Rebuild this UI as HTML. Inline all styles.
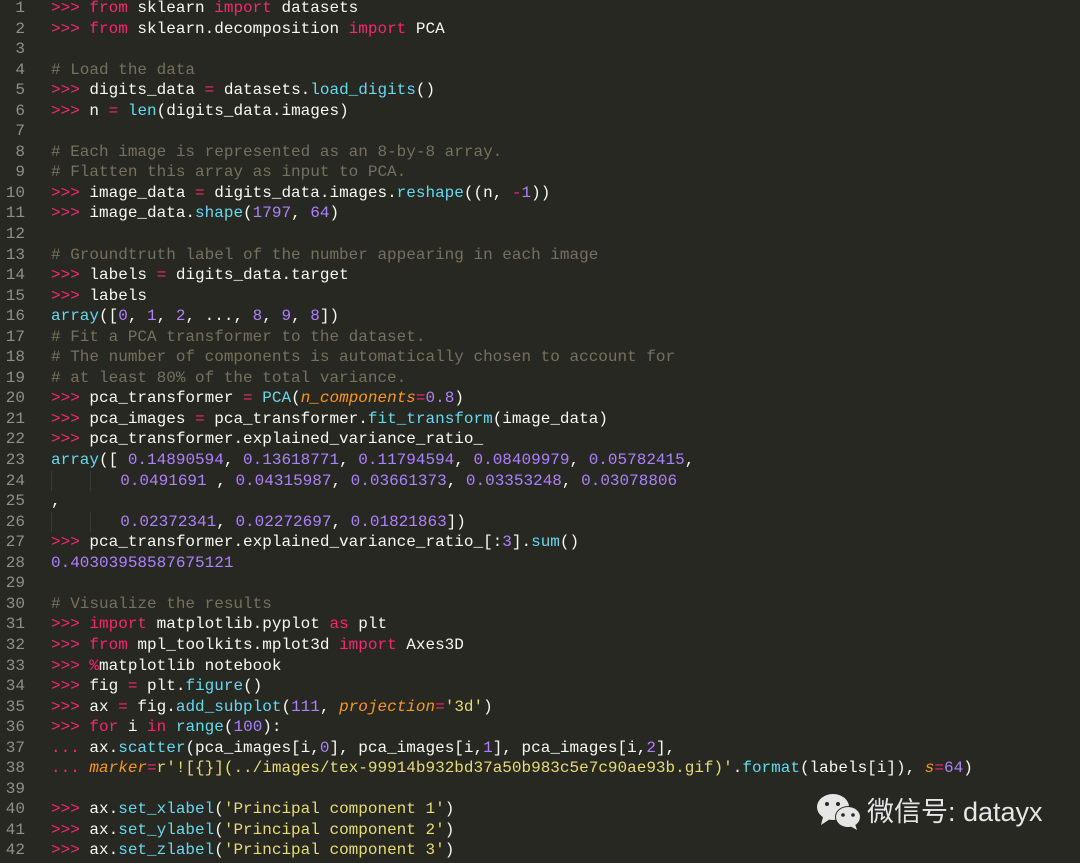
<!DOCTYPE html>
<html><head><meta charset="utf-8"><style>
html,body{margin:0;padding:0;background:#272822;width:1080px;height:863px;overflow:hidden}
.c{position:absolute;left:0;top:-2px;font-family:"Liberation Mono",monospace;font-size:16px;line-height:20.56px;color:#f8f8f2;white-space:normal}
.l{display:block;height:20.56px;white-space:pre}
.n{display:inline-block;width:51px;color:#8f908a;text-align:right;padding-right:26px;box-sizing:border-box}
.k{color:#f92672}.f{color:#66d9ef}.m{color:#ae81ff}.a{color:#fd971f;font-style:italic}.s{color:#e6db74}.cm{color:#75715e}
.g{display:inline-block;width:0;border-left:1px solid #3b3a32;height:20px;vertical-align:top}
.wm{position:absolute;left:867px;top:790px;font-family:"Liberation Sans","Noto Sans CJK SC",sans-serif;font-size:27px;color:#e6e6e6;white-space:nowrap}
</style></head><body>
<div class="c">
<span class="l"><span class="n">1</span><span class="k">&gt;&gt;&gt;</span> <span class="k">from</span> sklearn <span class="k">import</span> datasets</span>
<span class="l"><span class="n">2</span><span class="k">&gt;&gt;&gt;</span> <span class="k">from</span> sklearn.decomposition <span class="k">import</span> PCA</span>
<span class="l"><span class="n">3</span></span>
<span class="l"><span class="n">4</span><span class="cm"># Load the data</span></span>
<span class="l"><span class="n">5</span><span class="k">&gt;&gt;&gt;</span> digits_data <span class="k">=</span> datasets.<span class="f">load_digits</span>()</span>
<span class="l"><span class="n">6</span><span class="k">&gt;&gt;&gt;</span> n <span class="k">=</span> <span class="f">len</span>(digits_data.images)</span>
<span class="l"><span class="n">7</span></span>
<span class="l"><span class="n">8</span><span class="cm"># Each image is represented as an 8-by-8 array.</span></span>
<span class="l"><span class="n">9</span><span class="cm"># Flatten this array as input to PCA.</span></span>
<span class="l"><span class="n">10</span><span class="k">&gt;&gt;&gt;</span> image_data <span class="k">=</span> digits_data.images.<span class="f">reshape</span>((n, <span class="k">-</span><span class="m">1</span>))</span>
<span class="l"><span class="n">11</span><span class="k">&gt;&gt;&gt;</span> image_data.<span class="f">shape</span>(<span class="m">1797</span>, <span class="m">64</span>)</span>
<span class="l"><span class="n">12</span></span>
<span class="l"><span class="n">13</span><span class="cm"># Groundtruth label of the number appearing in each image</span></span>
<span class="l"><span class="n">14</span><span class="k">&gt;&gt;&gt;</span> labels <span class="k">=</span> digits_data.target</span>
<span class="l"><span class="n">15</span><span class="k">&gt;&gt;&gt;</span> labels</span>
<span class="l"><span class="n">16</span><span class="f">array</span>([<span class="m">0</span>, <span class="m">1</span>, <span class="m">2</span>, ..., <span class="m">8</span>, <span class="m">9</span>, <span class="m">8</span>])</span>
<span class="l"><span class="n">17</span><span class="cm"># Fit a PCA transformer to the dataset.</span></span>
<span class="l"><span class="n">18</span><span class="cm"># The number of components is automatically chosen to account for</span></span>
<span class="l"><span class="n">19</span><span class="cm"># at least 80% of the total variance.</span></span>
<span class="l"><span class="n">20</span><span class="k">&gt;&gt;&gt;</span> pca_transformer <span class="k">=</span> <span class="f">PCA</span>(<span class="a">n_components</span><span class="k">=</span><span class="m">0.8</span>)</span>
<span class="l"><span class="n">21</span><span class="k">&gt;&gt;&gt;</span> pca_images <span class="k">=</span> pca_transformer.<span class="f">fit_transform</span>(image_data)</span>
<span class="l"><span class="n">22</span><span class="k">&gt;&gt;&gt;</span> pca_transformer.explained_variance_ratio_</span>
<span class="l"><span class="n">23</span><span class="f">array</span>([ <span class="m">0.14890594</span>, <span class="m">0.13618771</span>, <span class="m">0.11794594</span>, <span class="m">0.08409979</span>, <span class="m">0.05782415</span>,</span>
<span class="l"><span class="n">24</span><span class="g"></span>    <span class="g"></span>   <span class="m">0.0491691</span> , <span class="m">0.04315987</span>, <span class="m">0.03661373</span>, <span class="m">0.03353248</span>, <span class="m">0.03078806</span></span>
<span class="l"><span class="n">25</span>,</span>
<span class="l"><span class="n">26</span><span class="g"></span>    <span class="g"></span>   <span class="m">0.02372341</span>, <span class="m">0.02272697</span>, <span class="m">0.01821863</span>])</span>
<span class="l"><span class="n">27</span><span class="k">&gt;&gt;&gt;</span> pca_transformer.explained_variance_ratio_[:<span class="m">3</span>].<span class="f">sum</span>()</span>
<span class="l"><span class="n">28</span><span class="m">0.40303958587675121</span></span>
<span class="l"><span class="n">29</span></span>
<span class="l"><span class="n">30</span><span class="cm"># Visualize the results</span></span>
<span class="l"><span class="n">31</span><span class="k">&gt;&gt;&gt;</span> <span class="k">import</span> matplotlib.pyplot <span class="k">as</span> plt</span>
<span class="l"><span class="n">32</span><span class="k">&gt;&gt;&gt;</span> <span class="k">from</span> mpl_toolkits.mplot3d <span class="k">import</span> Axes3D</span>
<span class="l"><span class="n">33</span><span class="k">&gt;&gt;&gt;</span> <span class="k">%</span>matplotlib notebook</span>
<span class="l"><span class="n">34</span><span class="k">&gt;&gt;&gt;</span> fig <span class="k">=</span> plt.<span class="f">figure</span>()</span>
<span class="l"><span class="n">35</span><span class="k">&gt;&gt;&gt;</span> ax <span class="k">=</span> fig.<span class="f">add_subplot</span>(<span class="m">111</span>, <span class="a">projection</span><span class="k">=</span><span class="s">'3d'</span>)</span>
<span class="l"><span class="n">36</span><span class="k">&gt;&gt;&gt;</span> <span class="k">for</span> i <span class="k">in</span> <span class="f">range</span>(<span class="m">100</span>):</span>
<span class="l"><span class="n">37</span><span class="k">...</span> ax.<span class="f">scatter</span>(pca_images[i,<span class="m">0</span>], pca_images[i,<span class="m">1</span>], pca_images[i,<span class="m">2</span>],</span>
<span class="l"><span class="n">38</span><span class="k">...</span> <span class="a">marker</span><span class="k">=</span><span class="s">r'![{}](../images/tex-99914b932bd37a50b983c5e7c90ae93b.gif)'</span>.<span class="f">format</span>(labels[i]), <span class="a">s</span><span class="k">=</span><span class="m">64</span>)</span>
<span class="l"><span class="n">39</span></span>
<span class="l"><span class="n">40</span><span class="k">&gt;&gt;&gt;</span> ax.<span class="f">set_xlabel</span>(<span class="s">'Principal component 1'</span>)</span>
<span class="l"><span class="n">41</span><span class="k">&gt;&gt;&gt;</span> ax.<span class="f">set_ylabel</span>(<span class="s">'Principal component 2'</span>)</span>
<span class="l"><span class="n">42</span><span class="k">&gt;&gt;&gt;</span> ax.<span class="f">set_zlabel</span>(<span class="s">'Principal component 3'</span>)</span>
</div>
<svg style="position:absolute;left:815px;top:791px" width="48" height="40" viewBox="0 0 48 40">
<ellipse cx="18" cy="16" rx="16" ry="13" fill="#e6e6e6"/>
<path d="M8 26 L6 34 L15 28Z" fill="#e6e6e6"/>
<circle cx="12" cy="13" r="2" fill="#272822"/><circle cx="23" cy="13" r="2" fill="#272822"/>
<ellipse cx="33" cy="26" rx="13" ry="11" fill="#272822"/>
<ellipse cx="33" cy="26" rx="12" ry="10" fill="#e6e6e6"/>
<path d="M40 33 L42 39 L35 35Z" fill="#e6e6e6"/>
<circle cx="28" cy="24" r="1.8" fill="#272822"/><circle cx="38" cy="24" r="1.8" fill="#272822"/>
</svg>
<div class="wm">微信号: datayx</div>
</body></html>
